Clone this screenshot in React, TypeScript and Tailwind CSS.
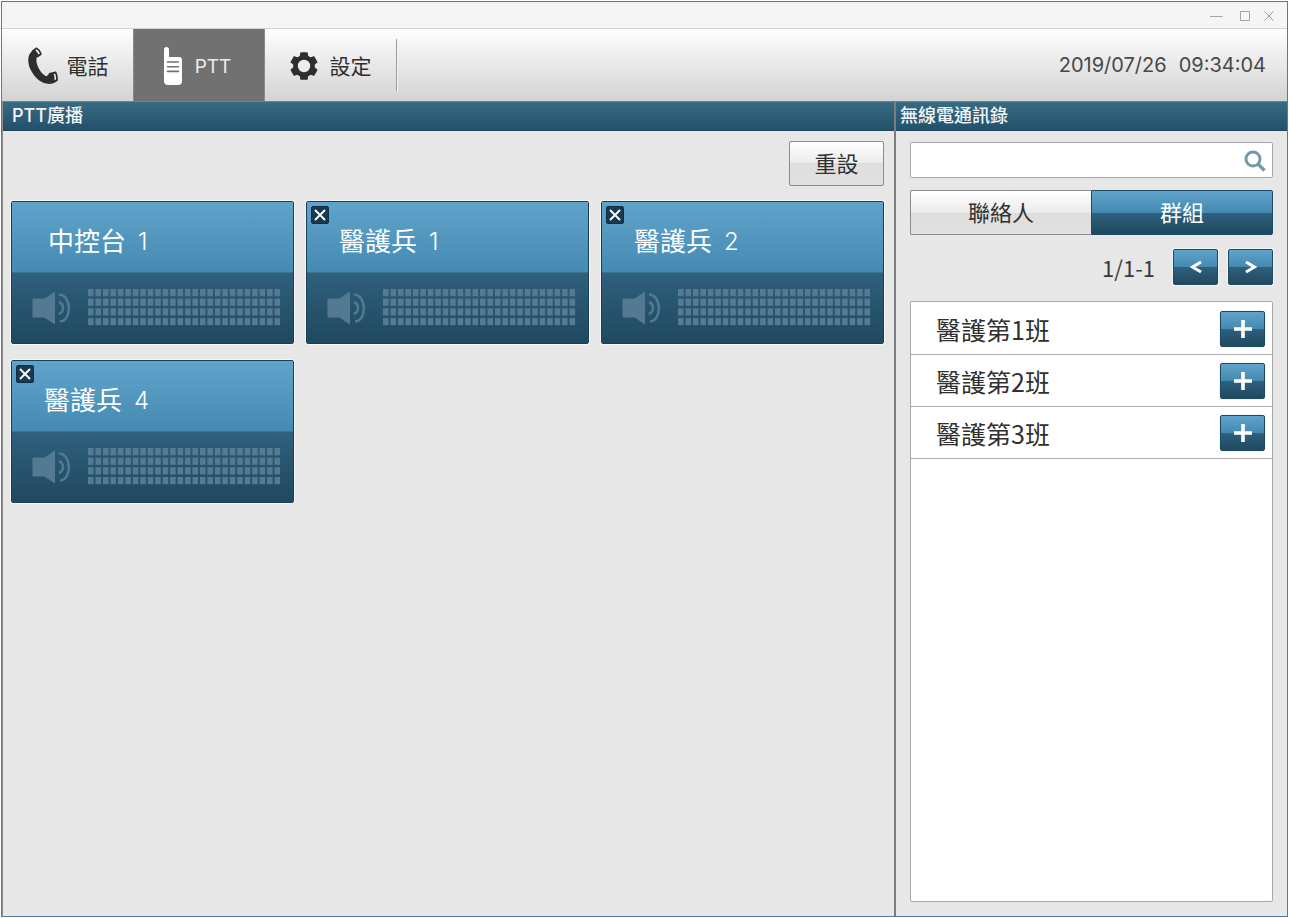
import { useState } from "react";

const BLUE_BUTTON =
  "border border-[#1c4a63] rounded-xs text-white shadow-[0_0_0_1px_#f4f4f4] bg-[linear-gradient(#61a3ca_0%,#4489b1_50%,#2f617e_50%,#1f495f_100%)]";
const LIGHT_BUTTON =
  "border border-[#8c8c8c] text-[#303030] bg-[linear-gradient(#ffffff_0%,#ebebeb_50%,#dfdddd_50%,#e2e0e0_100%)]";

function PhoneIcon() {
  return (
    <svg width="32" height="38" viewBox="0 0 32 38" aria-hidden="true">
      <path
        d="M4.500 4.500C.4 8.500.2 16 4 23.500c4.200 8 11 13.300 18 13.400 3 0 6-1 8-2.900l-.8-8.500-7 1.200-2.700 2.600c-2.500-.6-5.700-4.100-7.700-7.800C9.600 17.400 8.900 13.600 9.700 10.600l4.100-2.300L10 1.200Z"
        fill="#2e2e2e"
      />
      <path d="M5.800 3.900 9.500 1.200Q12.800 3 14 6.900L10.900 9.400Q9.300 6 5.800 3.900Z" fill="#2e2e2e" stroke="#2e2e2e" strokeWidth="1.600" strokeLinejoin="round" />
      <path d="M8.300 3.300 9.800 2.300Q11.900 4 12.900 6.500L11.500 7.500Q10.500 5.200 8.300 3.300Z" fill="#f2f2f2" />
      <path d="M22.500 26.800 28.500 25.200Q30.400 28.700 30 33.200L25.500 35Z" fill="#2e2e2e" stroke="#2e2e2e" strokeWidth="1.600" strokeLinejoin="round" />
      <path d="M26.700 27.100 28.200 26.700Q29.300 29.600 29 32.500L27.500 33.200Q27.900 30.100 26.700 27.100Z" fill="#f2f2f2" />
    </svg>
  );
}

function RadioIcon() {
  return (
    <svg width="20" height="38" viewBox="0 0 20 38" aria-hidden="true">
      <path d="M1 34V2.500a2.500 2.500 0 0 1 5 0V10h10a3 3 0 0 1 3 3V34a4 4 0 0 1-4 4H5a4 4 0 0 1-4-4Z" fill="#fff" />
      <path d="M4.500 15h11M4.500 19.700h11M4.500 24.400h11" stroke="#717171" strokeWidth="1.600" strokeLinecap="round" />
    </svg>
  );
}

function GearIcon() {
  return (
    <svg width="28" height="28" viewBox="0 0 28 28" aria-hidden="true">
      <g fill="#2e2e2e">
        <circle cx="14" cy="14" r="10.800" />
        {[0, 60, 120, 180, 240, 300].map((a) => (
          <path key={a} d="M10.300.8Q10.300.3 11 .3h6q.7 0 .7.5L18.500 6h-9Z" transform={`rotate(${a} 14 14)`} />
        ))}
      </g>
      <circle cx="14" cy="14" r="6.200" fill="#ededed" />
    </svg>
  );
}

function SpeakerIcon() {
  return (
    <svg width="39" height="34" viewBox="0 0 39 34" aria-hidden="true">
      <path d="M1.500 7.500h11L23 .5v33L12.500 26.500h-11Q.5 26.500.5 25.500v-17q0-1 1-1Z" fill="#547a91" />
      <path d="M27 11a6.500 6.500 0 0 1 0 12" fill="none" stroke="#547a91" strokeWidth="2.500" />
      <path d="M27 3.500C40 4 40 30 28 30.500" fill="none" stroke="#547a91" strokeWidth="2.500" />
    </svg>
  );
}

function LevelMeter() {
  const cells = [];
  for (let row = 0; row < 4; row++) {
    for (let col = 0; col < 26; col++) {
      cells.push(<rect key={`${row}-${col}`} x={col * 7.46} y={row * 9.65} width="5.600" height="7.200" />);
    }
  }
  return (
    <svg width="193" height="37" viewBox="0 0 193 37" fill="#567b91" aria-hidden="true">
      {cells}
    </svg>
  );
}

type Station = { name: string; num: string; closable: boolean };

const STATIONS: Station[] = [
  { name: "中控台", num: "1", closable: false },
  { name: "醫護兵", num: "1", closable: true },
  { name: "醫護兵", num: "2", closable: true },
  { name: "醫護兵", num: "4", closable: true },
];

function StationCard({ station }: { station: Station }) {
  return (
    <article className="relative flex h-[143px] flex-col overflow-hidden rounded-xs border border-[#173f55] shadow-[0_0_0_1px_#f6f6f6]">
      {station.closable && (
        <button
          type="button"
          aria-label="關閉"
          className="absolute left-1 top-1 flex size-[18px] items-center justify-center rounded-xs border border-[#0f2f42] bg-[#173a50]"
        >
          <svg width="12" height="12" viewBox="0 0 12 12" aria-hidden="true">
            <path d="m1 1 10 10M11 1 1 11" stroke="#fff" strokeWidth="1.900" />
          </svg>
        </button>
      )}
      <h2
        className={`flex h-[70px] items-center gap-3 bg-linear-to-b from-[#61a3ca] to-[#448ab3] pt-[10px] text-[26px] leading-8 text-white ${
          station.closable ? "pl-8" : "pl-9"
        }`}
      >
        <span>{station.name}</span>
        <span className="text-2xl font-light">{station.num}</span>
      </h2>
      <div className="flex flex-1 items-center justify-between border-t border-[#387391] bg-linear-to-b from-[#2f607d] to-[#1f495f] pb-px pl-5 pr-3">
        <SpeakerIcon />
        <LevelMeter />
      </div>
    </article>
  );
}

function PanelHeader({ children, className }: { children: string; className: string }) {
  return (
    <h1
      className={`h-[30px] border-y border-t-[#7c7f80] border-b-[#1e4760] bg-linear-to-b from-[#386c83] to-[#24506a] text-lg leading-7 font-medium text-[#f2f6f8] ${className}`}
    >
      {children}
    </h1>
  );
}

export default function App() {
  const [tab, setTab] = useState("group");
  return (
    <div className="flex min-h-screen bg-white p-px font-['Inter','Noto_Sans_CJK_TC',sans-serif]">
      <div className="flex flex-1 flex-col border border-[#4f7cb0] bg-[#e7e7e7]">
        <header>
          <div className="flex h-[27px] items-center justify-end gap-3 border-b border-[#d2d2d2] bg-[#f5f5f5] pr-3 pt-px">
            <button type="button" aria-label="最小化">
              <svg width="14" height="12" viewBox="0 0 14 12" aria-hidden="true">
                <path d="M1 6.500h12.500" stroke="#a5a5a5" />
              </svg>
            </button>
            <button type="button" aria-label="最大化" className="ml-1">
              <svg width="12" height="12" viewBox="0 0 12 12" aria-hidden="true">
                <path d="M1.500 1.500h9v9h-9z" fill="none" stroke="#a5a5a5" />
              </svg>
            </button>
            <button type="button" aria-label="關閉視窗">
              <svg width="12" height="12" viewBox="0 0 12 12" aria-hidden="true">
                <path d="m1.500 1.500 9 9M10.500 1.500l-9 9" stroke="#a0a0a0" />
              </svg>
            </button>
          </div>
          <div className="flex h-[72px] items-center bg-linear-to-b from-[#fefefe] to-[#d3d3d3]">
            <nav className="flex h-full items-center text-[21px] text-[#2e2e2e]">
              <button type="button" className="flex h-full w-[131px] items-center justify-center gap-2 pt-px">
                <PhoneIcon />
                <span className="pt-0.5">電話</span>
              </button>
              <button
                type="button"
                className="flex h-full w-[132px] items-center justify-center gap-3 border-x border-[#8a8a8a] bg-[#717171] pr-1 pt-0.5 text-[19px] text-[#ececec]"
              >
                <RadioIcon />
                <span className="pt-0.5">PTT</span>
              </button>
              <button type="button" className="flex h-full w-[131px] items-center justify-center gap-3 pt-px">
                <GearIcon />
                <span className="pt-0.5">設定</span>
              </button>
              <span className="h-[52px] border-l border-r border-l-[#9a9a9a] border-r-[#f4f4f4]" />
            </nav>
            <time className="ml-auto flex gap-3 pr-[21px] text-[20px] text-[#484848]">
              <span>2019/07/26</span>
              <span>09:34:04</span>
            </time>
          </div>
        </header>

        <div className="flex flex-1">
          <main className="flex-1 border-l border-[#8f8f8f]">
            <PanelHeader className="px-[9px]">PTT廣播</PanelHeader>
            <div className="flex flex-col gap-[15px] pl-2 pr-[10px] pt-[10px]">
              <button
                type="button"
                className={`h-[45px] w-[95px] self-end rounded-xs pt-0.5 text-[22px] ${LIGHT_BUTTON}`}
              >
                重設
              </button>
              <section className="grid grid-cols-3 gap-x-3 gap-y-4">
                {STATIONS.map((s) => (
                  <StationCard key={s.name + s.num} station={s} />
                ))}
              </section>
            </div>
          </main>

          <aside className="flex w-[393px] flex-col border-l-2 border-[#7d7d7d]">
            <PanelHeader className="px-1">無線電通訊錄</PanelHeader>
            <div className="flex flex-1 flex-col px-[14px] pb-[14px] pt-[11px]">
              <form className="flex h-9 items-center rounded-xs border border-[#a8a8a8] bg-white pr-[6px]">
                <input type="search" aria-label="搜尋" className="h-full min-w-0 flex-1 px-2 text-lg outline-none" />
                <button type="button" aria-label="搜尋" className="pt-0.5">
                  <svg width="22" height="22" viewBox="0 0 22 22" aria-hidden="true">
                    <circle cx="9" cy="9" r="7" fill="none" stroke="#7499ab" strokeWidth="3" />
                    <path d="m14 14 6.500 6.500" stroke="#7499ab" strokeWidth="3.400" />
                  </svg>
                </button>
              </form>

              <div className="mt-3 flex h-[45px] text-[22px]">
                <button
                  type="button"
                  onClick={() => setTab("contact")}
                  aria-pressed={tab === "contact"}
                  className={`flex-1 rounded-l-xs border-r-0 pt-0.5 ${LIGHT_BUTTON}`}
                >
                  聯絡人
                </button>
                <button
                  type="button"
                  onClick={() => setTab("group")}
                  aria-pressed={tab === "group"}
                  className="flex-1 rounded-r-xs border border-[#1c4a63] bg-[linear-gradient(#61a3ca_0%,#4489b1_50%,#2f617e_50%,#1f495f_100%)] pt-0.5 text-white"
                >
                  群組
                </button>
              </div>

              <div className="mt-[14px] flex items-center justify-end gap-[10px]">
                <span className="mr-2 font-['Noto_Sans_CJK_TC',sans-serif] text-[22px] leading-9 text-[#3a3a3a]">1/1-1</span>
                <button type="button" aria-label="上一頁" className={`flex h-9 w-[45px] items-center justify-center ${BLUE_BUTTON}`}>
                  <svg width="12" height="14" viewBox="0 0 12 14" aria-hidden="true">
                    <path d="M11 2 2.500 7 11 12" fill="none" stroke="#fff" strokeWidth="3" />
                  </svg>
                </button>
                <button type="button" aria-label="下一頁" className={`flex h-9 w-[45px] items-center justify-center ${BLUE_BUTTON}`}>
                  <svg width="12" height="14" viewBox="0 0 12 14" aria-hidden="true">
                    <path d="M1 2 9.500 7 1 12" fill="none" stroke="#fff" strokeWidth="3" />
                  </svg>
                </button>
              </div>

              <ul className="mt-4 flex-1 rounded-xs border border-[#a8a8a8] bg-white pt-px">
                {["醫護第1班", "醫護第2班", "醫護第3班"].map((g) => (
                  <li
                    key={g}
                    className="flex h-[52px] items-center justify-between border-b border-[#adadad] pl-[25px] pr-[7px] font-['Noto_Sans_CJK_TC',sans-serif] text-[25px] text-[#303030]"
                  >
                    <span className="leading-8">{g}</span>
                    <button type="button" aria-label={`加入${g}`} className={`flex h-9 w-[45px] items-center justify-center ${BLUE_BUTTON}`}>
                      <svg width="18" height="18" viewBox="0 0 18 18" aria-hidden="true">
                        <path d="M0 9h18M9 0v18" stroke="#fff" strokeWidth="3.600" />
                      </svg>
                    </button>
                  </li>
                ))}
              </ul>
            </div>
          </aside>
        </div>
      </div>
    </div>
  );
}
